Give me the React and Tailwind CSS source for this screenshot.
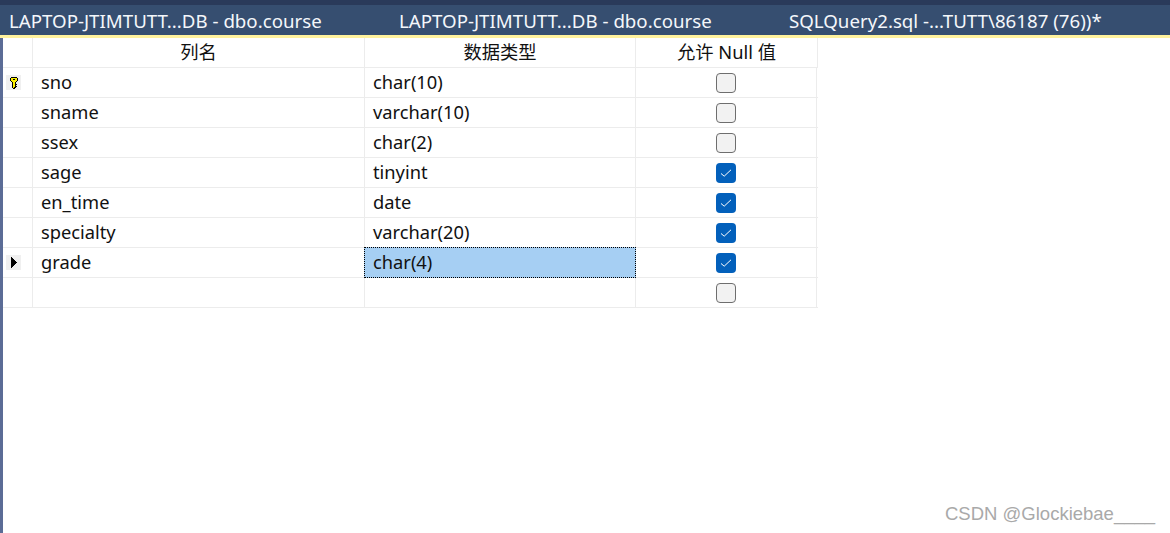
import React from "react";

const FONT = "font-['Noto_Sans','Noto_Sans_CJK_SC',sans-serif]";

const rows = [
  { name: "sno", type: "char(10)", nullable: false, marker: "key" },
  { name: "sname", type: "varchar(10)", nullable: false },
  { name: "ssex", type: "char(2)", nullable: false },
  { name: "sage", type: "tinyint", nullable: true },
  { name: "en_time", type: "date", nullable: true },
  { name: "specialty", type: "varchar(20)", nullable: true },
  { name: "grade", type: "char(4)", nullable: true, marker: "arrow", selected: true },
  { name: "", type: "", nullable: false },
];

function KeyIcon() {
  return (
    <svg width="8" height="12" viewBox="0 0 8 12" shapeRendering="crispEdges">
      <path d="M1 0h6v1h1v3H7v1H6v1H6v1h1v1H6v1h1v1H6v1H5v1H3v-1H2V5H1V4H0V1h1z" fill="#000" />
      <path d="M1 1h6v3H6v1H5v5H4v1H3V5H2V4H1z" fill="#fbf000" />
      <path d="M3 2h2v1H3z" fill="#000" />
    </svg>
  );
}

function ArrowIcon() {
  return (
    <svg width="6" height="11" viewBox="0 0 6 11" shapeRendering="crispEdges">
      <path d="M0 0h1v1h1v1h1v1h1v1h1v1h1v1H5v1H4v1H3v1H2v1H1v1H0z" fill="#000" />
    </svg>
  );
}

function CheckBox({ checked }) {
  if (checked) {
    return (
      <div className="w-5 h-5 rounded-[4px] bg-[#0360bb] flex items-center justify-center">
        <svg width="12" height="10" viewBox="0 0 12 10" fill="none">
          <path d="M1 5.5 L4.2 8.2 L11 1.8" stroke="#fff" strokeWidth="1" />
        </svg>
      </div>
    );
  }
  return <div className="w-5 h-5 rounded-[4px] bg-[#f2f2f2] border border-[#6e6e6e]" />;
}

function Tab({ label, width }) {
  return (
    <div className={`${width} text-[18.7px] text-[#f4f7fb] whitespace-nowrap leading-[32px]`}>{label}</div>
  );
}

function Row({ row }) {
  return (
    <div className="grid grid-cols-[30px_332px_271px_181px] h-[30px] border-b border-[#ececec] box-border">
      <div className="border-r border-[#ececec] flex items-center pl-[3px]">
        {row.marker && (
          <div className="w-[15px] h-[15px] bg-[#f0f0f0] flex items-center justify-center">
            {row.marker === "key" ? <KeyIcon /> : <ArrowIcon />}
          </div>
        )}
      </div>
      <div className="border-r border-[#ececec] pl-2 leading-[27px]">{row.name}</div>
      <div
        className={
          row.selected
            ? "-mt-px -mb-px -ml-px bg-[#a6cff3] outline-1 outline-dotted outline-black -outline-offset-1 pl-[9px] leading-[29px]"
            : "border-r border-[#ececec] pl-2 leading-[27px]"
        }
      >
        {row.type}
      </div>
      <div className="border-r border-[#ececec] flex items-center justify-center">
        <CheckBox checked={row.nullable} />
      </div>
    </div>
  );
}

export default function App() {
  return (
    <div className={`${FONT} w-[1170px] h-[533px] bg-white overflow-hidden flex flex-col relative`}>
      <div className="h-[5px] bg-[#2a3a5a]" />
      <div className="h-[30px] bg-[#364e70] flex pl-[9px]">
        <Tab label="LAPTOP-JTIMTUTT...DB - dbo.course" width="w-[390px]" />
        <Tab label="LAPTOP-JTIMTUTT...DB - dbo.course" width="w-[390px]" />
        <Tab label="SQLQuery2.sql -...TUTT\86187 (76))*" width="w-[340px]" />
      </div>
      <div className="h-[3px] bg-[#fff29d]" />
      <div className="flex flex-1">
        <div className="w-[3px] bg-[#5b6c96]" />
        <div className="text-[18.3px] text-[#111]">
          <div className="grid grid-cols-[30px_332px_271px_182px] h-[30px] border-b border-[#ececec] box-border text-center">
            <div className="border-r border-[#ececec]" />
            <div className="border-r border-[#ececec] leading-[27px]">列名</div>
            <div className="border-r border-[#ececec] leading-[27px]">数据类型</div>
            <div className="border-r border-[#ececec] leading-[27px]">允许 Null 值</div>
          </div>
          {rows.map((row, i) => (
            <Row key={i} row={row} />
          ))}
        </div>
      </div>
      <div className="absolute left-[945px] top-[503px] text-[18.5px] text-[#a9a9a9] font-['Liberation_Sans',sans-serif] leading-[22px]">
        CSDN @Glockiebae____
      </div>
    </div>
  );
}
